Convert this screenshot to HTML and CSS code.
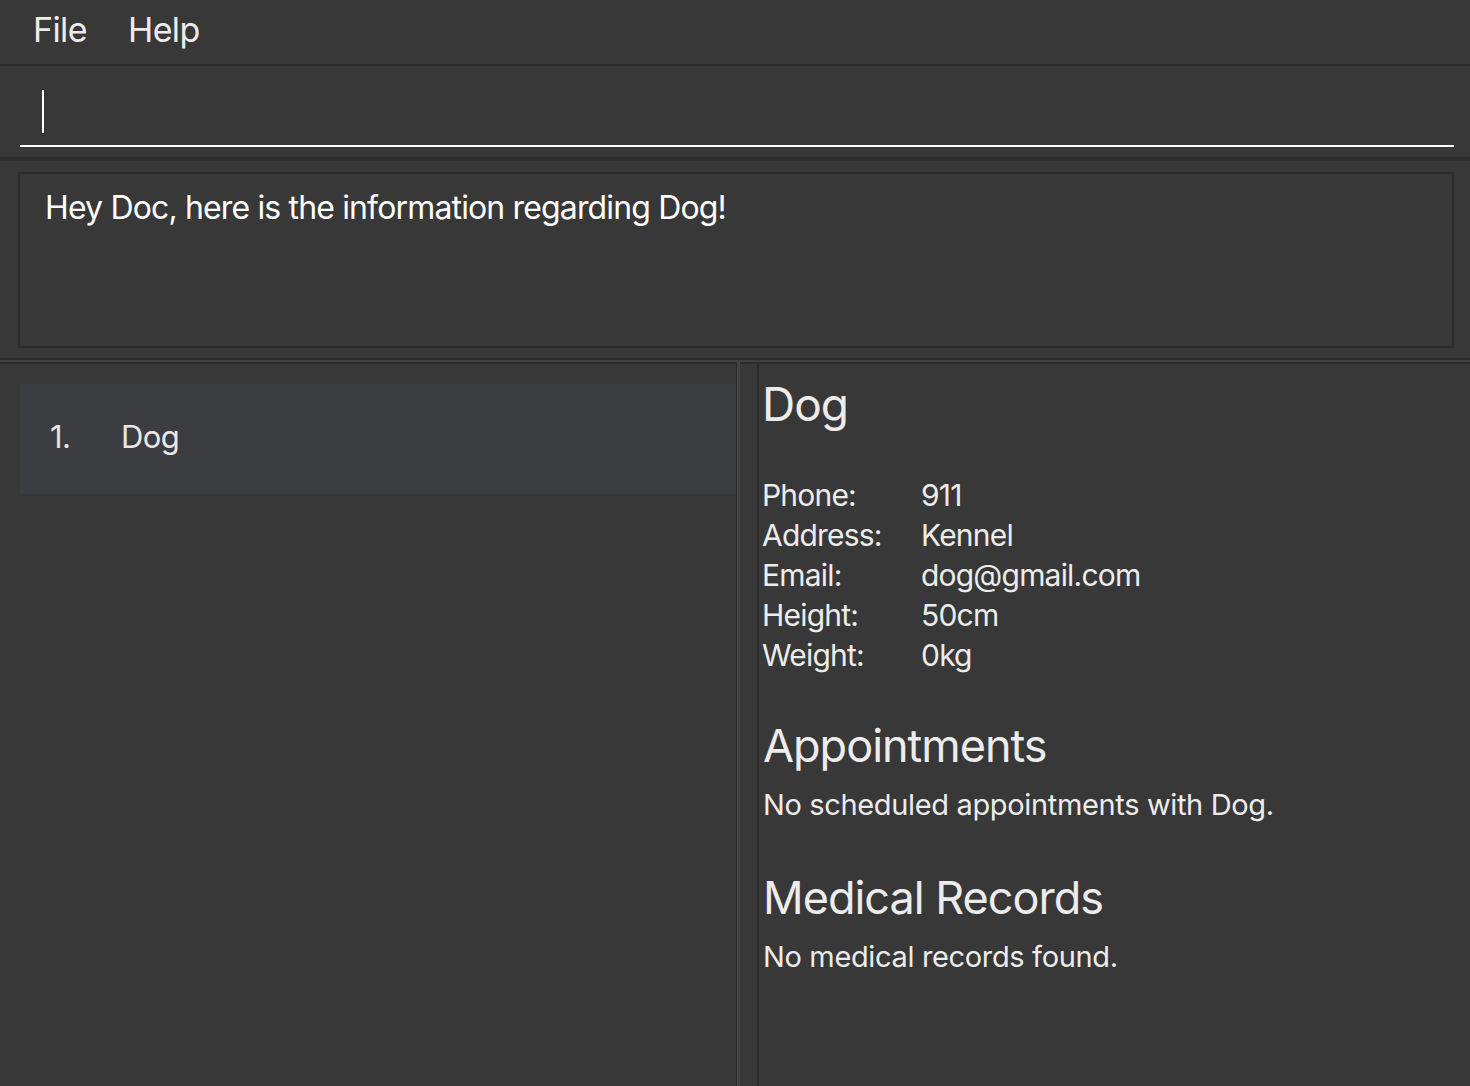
FILE: index.html
```html
<!DOCTYPE html>
<html>
<head>
<meta charset="utf-8">
<link rel="stylesheet" href="styles.css">
</head>
<body>
<div class="app">
  <div class="menubar">
    <span class="menu-item">File</span>
    <span class="menu-item">Help</span>
  </div>
  <div class="command">
    <div class="field"><span class="caret"></span></div>
  </div>
  <div class="result-wrap">
    <div class="result">Hey Doc, here is the information regarding Dog!</div>
  </div>
  <div class="main">
    <div class="list">
      <div class="cell"><span class="idx">1.</span><span class="name">Dog</span></div>
    </div>
    <div class="divider"></div>
    <div class="detail">
      <div class="title">Dog</div>
      <div class="info">
        <div class="row"><span class="label">Phone:</span><span class="val">911</span></div>
        <div class="row"><span class="label">Address:</span><span class="val">Kennel</span></div>
        <div class="row"><span class="label">Email:</span><span class="val">dog@gmail.com</span></div>
        <div class="row"><span class="label">Height:</span><span class="val">50cm</span></div>
        <div class="row"><span class="label">Weight:</span><span class="val">0kg</span></div>
      </div>
      <div class="section-title appt">Appointments</div>
      <div class="section-text">No scheduled appointments with Dog.</div>
      <div class="section-title med">Medical Records</div>
      <div class="section-text">No medical records found.</div>
    </div>
  </div>
</div>
</body>
</html>
```
FILE: styles.css
```css
html, body {
  margin: 0;
  padding: 0;
  background: #383838;
  height: 100%;
  overflow: hidden;
}
body {
  font-family: Inter, "Open Sans", sans-serif;
  color: #ececec;
}
.app {
  display: flex;
  flex-direction: column;
  height: 1086px;
}
.menubar {
  border-bottom: 2px solid #2b2b2b;
  display: flex;
  align-items: center;
  padding-left: 33px;
  gap: 41px;
  box-sizing: border-box;
  height: 66px;
}
.menu-item {
  font-size: 34px;
  letter-spacing: -0.6px;
  color: #ececec;
  margin-top: -5px;
}
.command {
  height: 91px;
  border-bottom: 4px solid #2d2d2d;
  padding: 0 16px 0 20px;
  display: flex;
  flex-direction: column;
}
.field {
  margin-top: 24px;
  height: 55px;
  border-bottom: 2px solid #ffffff;
  padding-left: 22px;
}
.caret {
  display: block;
  width: 2px;
  height: 43px;
  background: #ffffff;
}
.result-wrap {
  padding: 11px 16px 10px 18px;
  border-bottom: 2px solid #2b2b2b;
}
.result {
  box-sizing: border-box;
  height: 176px;
  border: 2px solid #2b2b2b;
  padding: 14px 0 0 25px;
  font-size: 32px;
  letter-spacing: -0.85px;
  color: #ffffff;
  line-height: 40px;
}
.main {
  flex: 1;
  display: flex;
  border-top: 2px solid #404040;
  box-shadow: inset 0 2px 0 #2b2b2b;
}
.list {
  width: 716px;
  padding: 22px 0 0 20px;
  border-right: 1px solid #2b2b2b;
}
.cell {
  height: 110px;
  background: #3c3d40;
  display: flex;
  align-items: center;
  font-size: 31px;
  letter-spacing: -0.6px;
  color: #e8e8e8;
  padding-bottom: 6px;
  box-sizing: border-box;
}
.idx {
  padding-left: 30px;
  width: 101px;
  flex: none;
  box-sizing: border-box;
}
.divider {
  width: 3px;
  background: #434343;
  margin-right: 17px;
}
.detail {
  flex: 1;
  padding: 14px 0 0 3px;
  border-left: 2px solid #2b2b2b;
}
.title {
  font-size: 46px;
  letter-spacing: -1px;
  line-height: 56px;
  color: #ececec;
}
.info {
  margin-top: 43px;
  font-size: 30px;
  letter-spacing: -0.8px;
  line-height: 40px;
}
.row {
  display: flex;
}
.label {
  width: 159px;
}
.section-title {
  font-size: 45px;
  letter-spacing: -1px;
  line-height: 56px;
  padding-left: 1px;
}
.section-title.appt {
  margin-top: 43px;
}
.section-title.med {
  margin-top: 45px;
}
.section-text {
  font-size: 29px;
  letter-spacing: -0.35px;
  line-height: 40px;
  padding-left: 1px;
  margin-top: 11px;
}
```
